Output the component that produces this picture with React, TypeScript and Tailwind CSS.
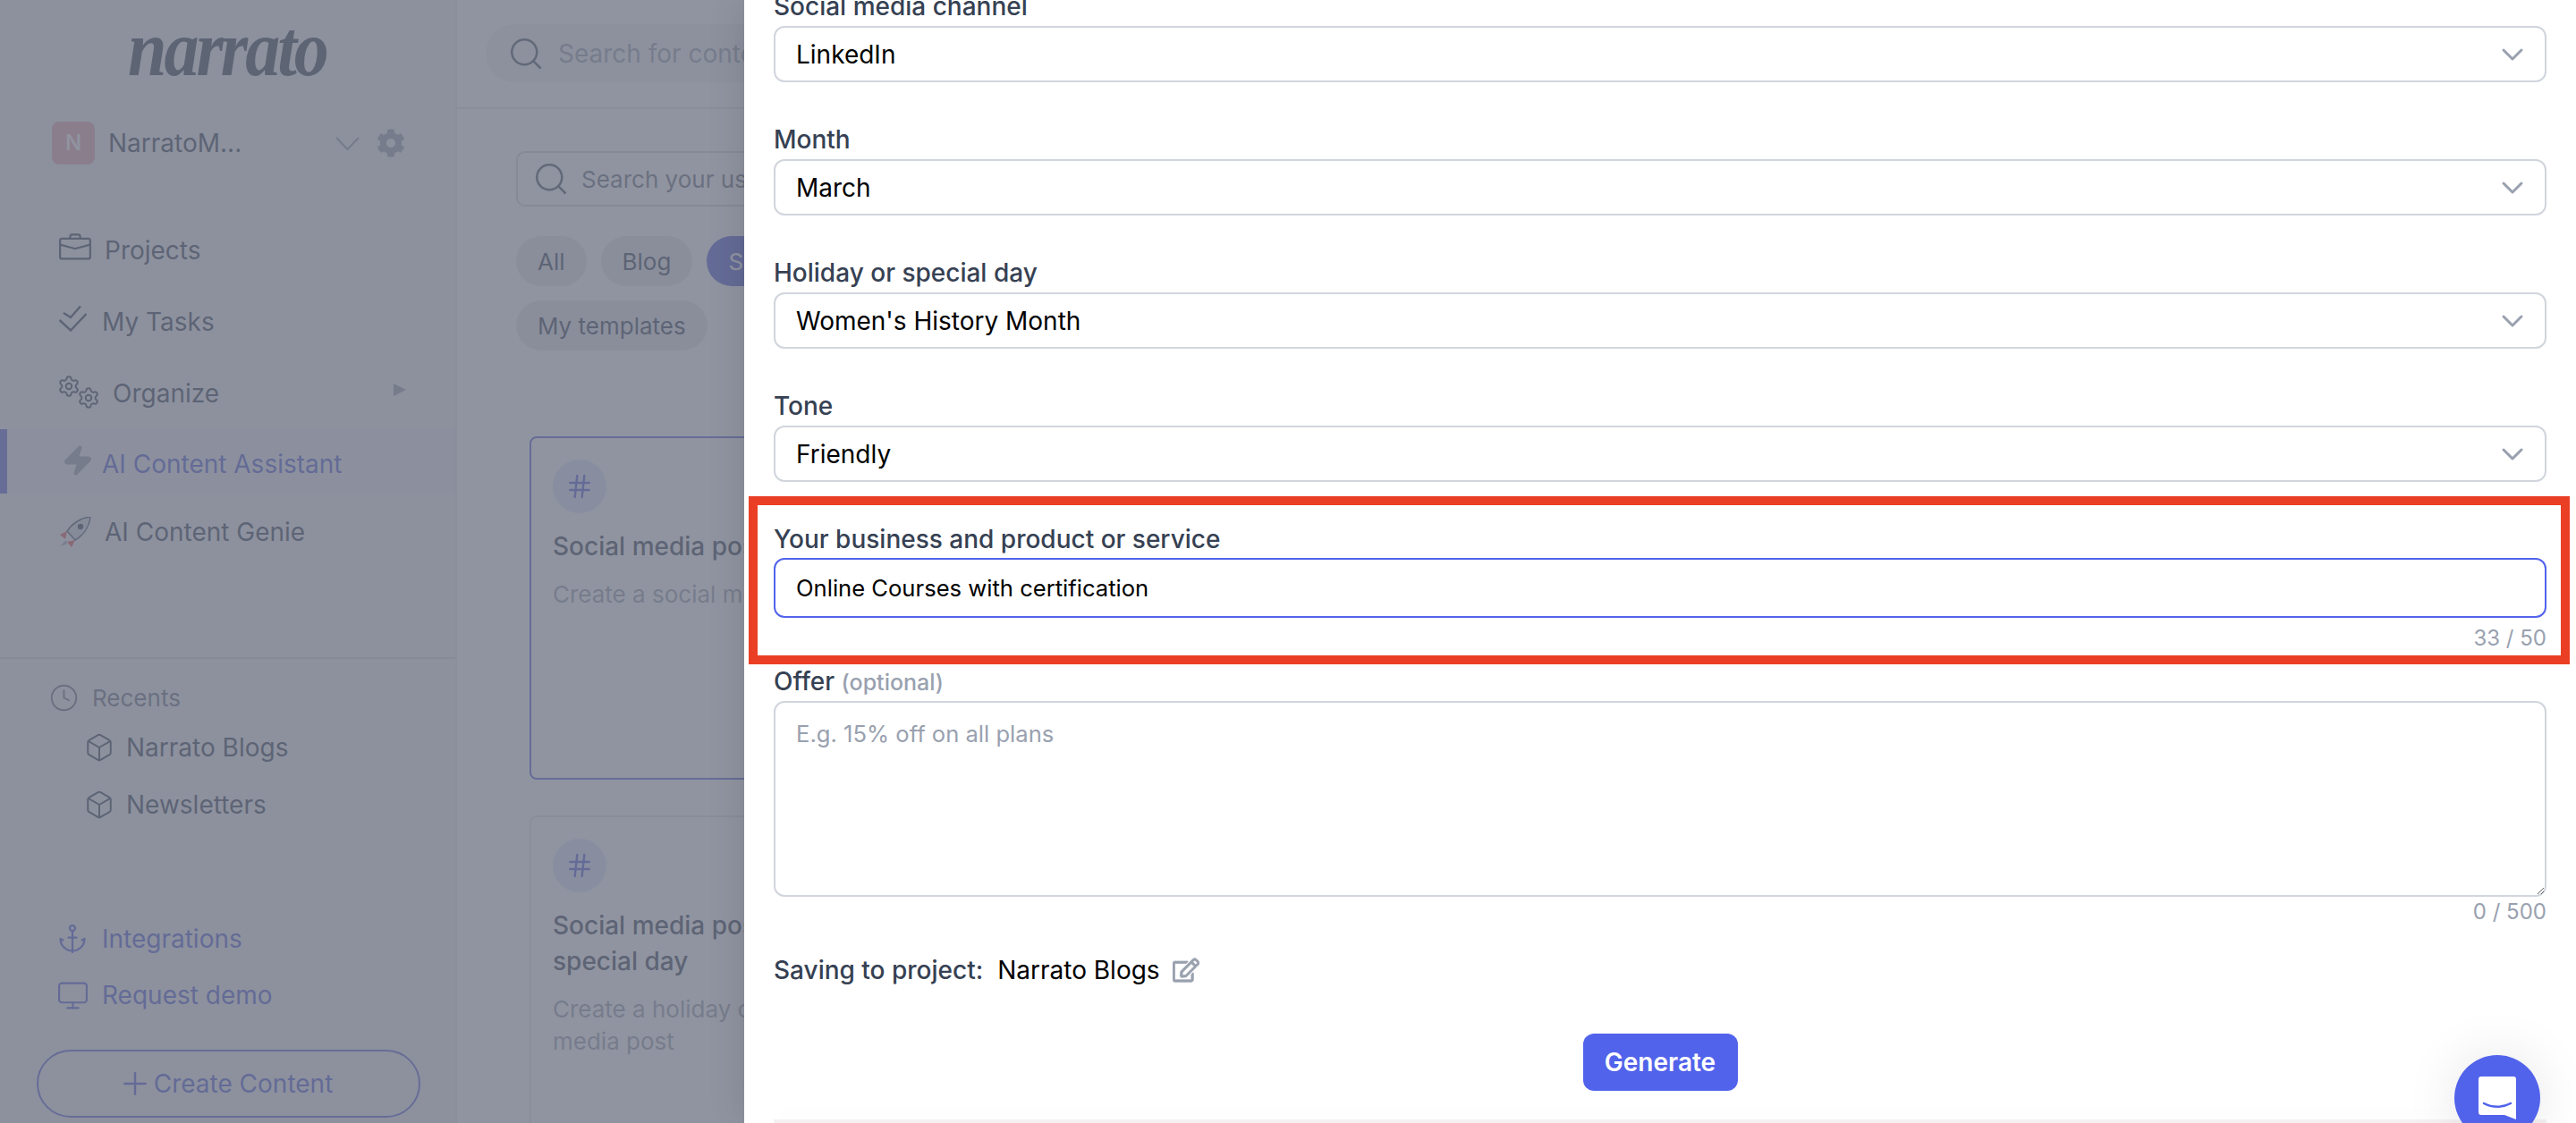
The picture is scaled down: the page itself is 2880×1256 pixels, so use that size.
import { Anchor, Box, ChevronDown, Clock, Hash, Monitor, Plus, Search, Settings, Zap } from "lucide-react";
import { BsBriefcase } from "react-icons/bs";
import { FaCog, FaRegEdit } from "react-icons/fa";

const labelClass = "block h-[40px] mb-[2px] text-[28px] leading-[40px] font-medium text-gray-700";

function SelectField({ label, value }: { label: string; value: string }) {
  return (
    <div className="mb-[44px]">
      <label className={labelClass}>{label}</label>
      <div className="flex h-[63px] items-center justify-between rounded-[12px] border-2 border-gray-300 bg-white pl-[23px] pr-[16px] text-[28px] text-black">
        <span>{value}</span>
        <ChevronDown size={40} strokeWidth={1.8} className="text-gray-400" />
      </div>
    </div>
  );
}

function Sidebar() {
  return (
    <aside className="flex h-full w-[511px] shrink-0 flex-col border-r-2 border-gray-200 bg-[#f2f2f6] text-gray-700 *:shrink-0">
      <div className="flex h-[108px] items-center justify-center pr-[1px]">
        <span className="inline-block scale-y-[1.15] text-[78px] leading-none font-bold italic tracking-[-3px] text-[#374151] [font-family:'Liberation_Serif',serif]">narrato</span>
      </div>
      <div className="mt-[28px] flex h-[48px] items-center pl-[58px]">
        <span className="flex h-[48px] w-[48px] items-center justify-center rounded-[8px] bg-[#e8a6b4] text-[24px] font-medium text-white">N</span>
        <span className="ml-[15px] text-[28px]">NarratoM...</span>
        <svg width="27" height="15" viewBox="0 0 27 15" className="ml-auto text-gray-400">
          <path d="M1 1l12.5 13L26 1" fill="none" stroke="currentColor" strokeWidth="2.2" />
        </svg>
        <FaCog size={32} className="ml-[19px] mr-[56px] text-gray-400" />
      </div>

      <nav className="mt-[56px]">
        <div className="flex h-[80px] items-center pl-[66px] text-[28px]">
          <BsBriefcase size={36} className="-mt-[6px]" />
          <span className="ml-[15px]">Projects</span>
        </div>
        <div className="flex h-[80px] items-center pl-[66px] text-[28px]">
          <svg width="31" height="29" viewBox="0 0 31 29" className="-mt-[8px]">
            <path d="M0.5 16L13 27.5 30.5 9M5 8l8 5L24 0.5" fill="none" stroke="currentColor" strokeWidth="2.4" />
          </svg>
          <span className="ml-[17px]">My Tasks</span>
        </div>
        <div className="flex h-[80px] items-center pl-[66px] text-[28px]">
          <span className="relative -mt-[4px] h-[35px] w-[44px]">
            <Settings size={26} strokeWidth={1.8} className="absolute -left-[2px] -top-[2px]" />
            <Settings size={26} strokeWidth={1.8} className="absolute -bottom-[2px] -right-[2px]" />
          </span>
          <span className="ml-[16px]">Organize</span>
          <span className="ml-auto mr-[55px] -mt-[8px] h-0 w-0 border-y-[7px] border-l-[14px] border-y-transparent border-l-gray-400" />
        </div>
        <div className="flex h-[72px] items-center border-l-[8px] border-[#5c63d8] bg-[#eeeef5] pl-[64px] text-[28px] text-[#4f5bd5]">
          <Zap size={36} className="-ml-[3px] -mt-[2px] fill-gray-400 text-gray-400" />
          <span className="ml-[9px] pt-[6px]">AI Content Assistant</span>
        </div>
        <div className="flex h-[86px] items-center pl-[66px] text-[28px]">
          <svg width="36" height="34" viewBox="0 0 36 34">
            <path d="M9 16L1 20l6 5zM18 26l-4 8-5-6z" fill="#e25555" />
            <path d="M8 26l-7 7 8-3z" fill="#9ca3af" />
            <path d="M35 0C25 1 15 7 9 16l9 10C28 20 34 10 35 0z" fill="#d8dce8" stroke="#475569" strokeWidth="1.5" />
            <circle cx="24" cy="11" r="3.2" fill="#334155" />
          </svg>
          <span className="ml-[15px]">AI Content Genie</span>
        </div>
      </nav>

      <div className="mt-[97px] border-t-2 border-gray-300 pl-[58px]">
        <div className="mt-[28px] flex h-[30px] items-center text-[26px] text-gray-500">
          <Clock size={33} strokeWidth={1.4} className="-mx-[3px]" />
          <span className="ml-[18px]">Recents</span>
        </div>
        <div className="mt-[26px] flex h-[30px] items-center pl-[39px] text-[28px]">
          <Box size={34} strokeWidth={1.4} className="-mx-[3px]" />
          <span className="ml-[16px]">Narrato Blogs</span>
        </div>
        <div className="mt-[34px] flex h-[30px] items-center pl-[39px] text-[28px]">
          <Box size={34} strokeWidth={1.4} className="-mx-[3px]" />
          <span className="ml-[16px]">Newsletters</span>
        </div>
      </div>

      <div className="mt-[104px] flex h-[62px] items-center pl-[66px] text-[28px] text-[#4f5bd5]">
        <Anchor size={36} strokeWidth={1.5} className="-mx-[3px]" />
        <span className="ml-[18px]">Integrations</span>
      </div>
      <div className="flex h-[64px] items-center pl-[66px] text-[28px] text-[#4f5bd5]">
        <Monitor size={37} strokeWidth={1.4} className="-mx-[3px]" />
        <span className="ml-[17px]">Request demo</span>
      </div>
      <div className="ml-[41px] mt-[29px] flex h-[76px] w-[429px] items-center justify-center rounded-full border-2 border-[#5c63d8] text-[28px] text-[#4f5bd5]">
        <Plus size={40} strokeWidth={1.5} className="-mx-[8px]" />
        <span className="ml-[9px]">Create Content</span>
      </div>
    </aside>
  );
}

function TemplateCard({ active, title, desc }: { active?: boolean; title: string[]; desc: string[] }) {
  return (
    <div className={"ml-[15px] rounded-[8px] border-2 px-[24px] py-[24px] " + (active ? "h-[384px] border-[#5c63d8]" : "mt-[40px] h-[400px] border-gray-200")}>
      <div className="flex h-[60px] w-[60px] items-center justify-center rounded-full bg-indigo-100 text-[#4f5bd5]">
        <Hash size={32} strokeWidth={1.8} />
      </div>
      <div className="mt-[17px] text-[28px] leading-[40px] font-medium whitespace-nowrap text-gray-700">
        {title.map((t) => (
          <div key={t}>{t}</div>
        ))}
      </div>
      <div className="mt-[16px] text-[26px] leading-[36px] whitespace-nowrap text-gray-400">
        {desc.map((t) => (
          <div key={t}>{t}</div>
        ))}
      </div>
    </div>
  );
}

function MainArea() {
  return (
    <main className="h-full w-[321px] shrink-0 overflow-hidden bg-white">
      <header className="flex h-[122px] w-[1000px] items-start border-b-2 border-gray-200 pl-[32px] pt-[27px]">
        <div className="flex h-[65px] w-[900px] items-center rounded-full bg-gray-100 pl-[29px] text-[28px] whitespace-nowrap text-gray-400">
          <Search size={42} strokeWidth={1.5} className="-mx-[5px] shrink-0 text-gray-600" />
          <span className="ml-[20px]">Search for content</span>
        </div>
      </header>
      <div className="w-[1000px] pl-[66px] pt-[47px]">
        <div className="flex h-[62px] w-[900px] items-center rounded-[10px] border-2 border-gray-300 pl-[21px] text-[26px] whitespace-nowrap text-gray-500">
          <Search size={42} strokeWidth={1.5} className="-mx-[5px] shrink-0 text-gray-600" />
          <span className="ml-[18px]">Search your use cases</span>
        </div>
        <div className="mt-[33px] flex gap-[16px] text-[26px] text-gray-700">
          <span className="flex h-[56px] items-center rounded-full bg-gray-200 px-[24px]">All</span>
          <span className="flex h-[56px] items-center rounded-full bg-gray-200 px-[24px]">Blog</span>
          <span className="flex h-[56px] items-center rounded-full bg-[#4f5bd5] px-[24px] text-white">Social media</span>
        </div>
        <div className="mt-[16px] flex text-[26px] text-gray-700">
          <span className="flex h-[56px] items-center rounded-full bg-gray-200 px-[24px]">My templates</span>
        </div>
        <div className="mt-[96px]">
          <TemplateCard active title={["Social media post"]} desc={["Create a social media post"]} />
          <TemplateCard title={["Social media post for a", "special day"]} desc={["Create a holiday or special day social", "media post"]} />
        </div>
      </div>
    </main>
  );
}

function ModalPanel() {
  return (
    <section className="absolute inset-y-0 right-0 flex w-[2048px] flex-col overflow-hidden bg-white px-[33px] shadow-[0_0_40px_rgba(0,0,0,0.12)] [font-family:Inter,sans-serif]">
      <div className="-mt-[13px] shrink-0">
        <SelectField label="Social media channel" value="LinkedIn" />
        <SelectField label="Month" value="March" />
        <SelectField label="Holiday or special day" value="Women's History Month" />
        <SelectField label="Tone" value="Friendly" />

        <label className="block h-[40px] mb-px text-[28px] leading-[40px] font-medium text-gray-700">Your business and product or service</label>
        <input
          readOnly
          value="Online Courses with certification"
          className="block h-[67px] w-full rounded-[12px] border-2 border-[#5263eb] pl-[23px] text-[25.6px] text-black outline-none"
        />
        <div className="mt-[7px] h-[32px] text-right text-[24px] leading-[32px] text-gray-400">33 / 50</div>

        <label className={labelClass + " mt-[12px]"}>
          Offer <span className="text-[25px] text-gray-400">(optional)</span>
        </label>
        <textarea
          readOnly
          placeholder="E.g. 15% off on all plans"
          className="block h-[219px] w-full rounded-[12px] border-2 border-gray-300 px-[23px] py-[17px] text-[25.6px] leading-[36px] outline-none placeholder:text-gray-400"
        />
        <div className="mt-px h-[32px] text-right text-[24px] leading-[32px] text-gray-400">0 / 500</div>

        <div className="mt-[29px] flex h-[40px] items-center text-[28px]">
          <span className="font-medium text-gray-700">Saving to project:</span>
          <span className="ml-[16px] text-black">Narrato Blogs</span>
          <FaRegEdit size={30} stroke="currentColor" strokeWidth={14} className="ml-[14px] text-gray-400" />
        </div>

        <div className="mt-[51px] flex justify-center">
          <button className="h-[64px] w-[173px] rounded-[12px] bg-[#5263eb] text-[28px] font-semibold text-white">Generate</button>
        </div>
      </div>
      <div className="mt-[32px] h-[4px] shrink-0 bg-[#f5f1f3] shadow-[0_-8px_20px_rgba(0,0,0,0.03)]" />
    </section>
  );
}

export default function App() {
  return (
    <div className="relative flex h-[1256px] w-[2880px] overflow-hidden bg-white [font-family:Inter,sans-serif]">
      <Sidebar />
      <MainArea />
      <div className="absolute inset-0 bg-[#6b7080]/75" />
      <ModalPanel />
      {/* annotation round the business field */}
      <div className="absolute left-[837px] top-[555px] h-[188px] w-[2036px] border-[10px] border-[#ea3f25]" />
      <div className="absolute left-[2744px] top-[1180px] flex h-[96px] w-[96px] justify-center rounded-full bg-[#5263eb] pt-[24px] shadow-[0_0_60px_rgba(0,0,0,0.1)]">
        <svg width="42" height="48" viewBox="0 0 42 48">
          <path d="M3 0h36a3 3 0 0 1 3 3v45l-13-5H3a3 3 0 0 1-3-3V3a3 3 0 0 1 3-3z" fill="#fff" />
          <path d="M6 30c9 5 21 5 30 0" fill="none" stroke="#5263eb" strokeWidth="2.5" strokeLinecap="round" />
        </svg>
      </div>
    </div>
  );
}
